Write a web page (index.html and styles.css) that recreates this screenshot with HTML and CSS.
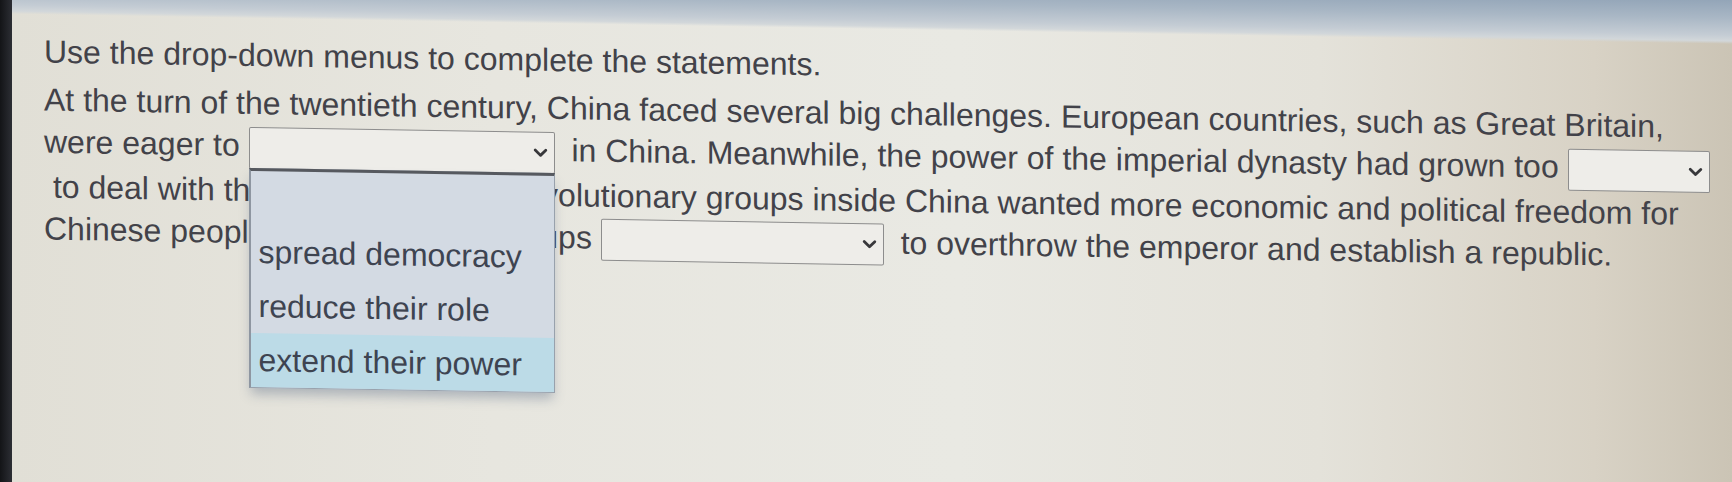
FILE: index.html
```html
<!DOCTYPE html>
<html lang="en">
<head>
<meta charset="utf-8">
<title>Use the drop-down menus</title>
<link rel="stylesheet" href="styles.css">
</head>
<body>
<div class="screen">
  <div class="bezel"></div>
  <main class="page">
    <div class="content">
      <p class="instructions">Use the drop-down menus to complete the statements.</p>
      <div class="passage">At the turn of the twentieth century, China faced several big challenges. European countries, such as Great Britain,<br>
        were eager to <div class="dd dd-wide"><svg viewBox="0 0 15 10" aria-hidden="true"><path d="M2.2 2.4 L7.5 7.6 L12.8 2.4"/></svg><ul class="dd-list">
            <li></li>
            <li>spread democracy</li>
            <li>reduce their role</li>
            <li class="active">extend their power</li>
          </ul></div> in China. Meanwhile, the power of the imperial dynasty had grown too <div class="dd dd-narrow"><svg viewBox="0 0 15 10" aria-hidden="true"><path d="M2.2 2.4 L7.5 7.6 L12.8 2.4"/></svg></div><br>
        &nbsp;to deal with these problems. Yet revolutionary groups inside China wanted more economic and political freedom for<br>
        Chinese people. Many of these groups <div class="dd dd-mid"><svg viewBox="0 0 15 10" aria-hidden="true"><path d="M2.2 2.4 L7.5 7.6 L12.8 2.4"/></svg></div> to overthrow the emperor and establish a republic.</div>
    </div>
  </main>
</div>
</body>
</html>
```

FILE: styles.css
```css
html, body {
  margin: 0;
  height: 100%;
}

body {
  font-family: "Liberation Sans", Arial, sans-serif;
  background: #1c1d22;
  overflow: hidden;
}

.screen {
  display: flex;
  height: 482px;
}

.bezel {
  flex: none;
  width: 12px;
  background: linear-gradient(90deg, #131417, #2c2e34);
}

.page {
  flex: 1;
  background:
    linear-gradient(181deg, #93a5b8 0px, #a9b7c5 18px, #c4ccd4 35px, #d2d7da 41px, rgba(210, 215, 218, 0) 44px),
    linear-gradient(90deg, #e1dfd6 0%, #e7e6df 28%, #e9e9e3 55%, #e4e2da 76%, #d8d2c5 92%, #cbc4b5 100%);
}

.content {
  padding: 30px 0 0 32px;
  transform: skewY(0.95deg);
  transform-origin: 0 0;
  color: #424249;
  font-size: 32px;
  line-height: 42px;
}

.instructions {
  margin: 0 0 6px;
}

.passage {
  white-space: nowrap;
}

.dd {
  position: relative;
  display: inline-flex;
  align-items: center;
  justify-content: flex-end;
  box-sizing: border-box;
  height: 42px;
  margin-right: 8px;
  padding-right: 6px;
  vertical-align: middle;
  background: #eeede9;
  border: 1px solid #8d8d8d;
  border-radius: 2px;
}

.dd-wide {
  width: 306px;
}

.dd-narrow {
  width: 142px;
}

.dd-mid {
  width: 283px;
}

.dd svg {
  width: 15px;
  height: 10px;
  fill: none;
  stroke: #38383b;
  stroke-width: 2.8;
  stroke-linecap: round;
  stroke-linejoin: round;
}

.dd-list {
  position: absolute;
  top: 100%;
  left: -1px;
  right: -1px;
  z-index: 2;
  margin: 0;
  padding: 0;
  list-style: none;
  background: #d3dae3;
  border: 1px solid #98a1ac;
  border-left: 2px solid #8e96a1;
  border-top: 3px solid #56595f;
  box-shadow: 0 8px 12px -2px rgba(70, 90, 120, 0.35);
}

.dd-list li {
  height: 54px;
  line-height: 54px;
  padding-left: 8px;
  color: #3e4451;
}

.dd-list li.active {
  background: #bcdbe7;
}
```
